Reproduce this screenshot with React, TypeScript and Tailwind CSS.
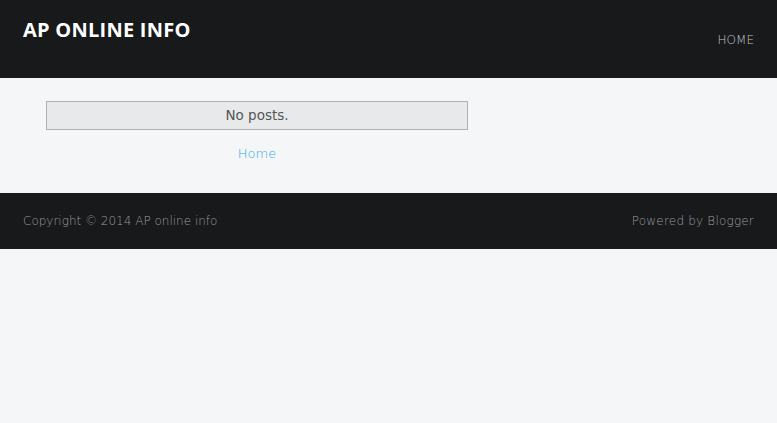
export default function App() {
  return (
    <div className="min-h-[423px] bg-[#f5f6f8]" style={{ fontFamily: '"DejaVu Sans", sans-serif' }}>
      <header className="h-[78px] bg-[#18191b] flex items-start justify-between px-[23px]">
        <h1 className="mt-[15px] text-[20px] font-bold text-white tracking-[0.25px]" style={{ fontFamily: '"Open Sans", sans-serif' }}>AP ONLINE INFO</h1>
        <nav className="mt-[31px] text-[12px] text-[#c4c5c7] font-extralight">HOME</nav>
      </header>
      <main className="h-[115px] pt-[23px]">
        <div className="ml-[46px] w-[422px]">
          <div className="h-[29px] border border-[#b0b1b3] bg-[#e8e9eb] flex items-center justify-center text-[13.5px] text-[#555]">No posts.</div>
          <div className="mt-[14px] text-center text-[13px] text-[#2fa8e6] font-extralight">Home</div>
        </div>
      </main>
      <footer className="h-[56px] bg-[#18191b] flex items-center justify-between px-[23px] text-[12px] text-[#9a9b9d] font-extralight">
        <span>Copyright © 2014 AP online info</span>
        <span className="tracking-[0.2px]">Powered by Blogger</span>
      </footer>
    </div>
  );
}
